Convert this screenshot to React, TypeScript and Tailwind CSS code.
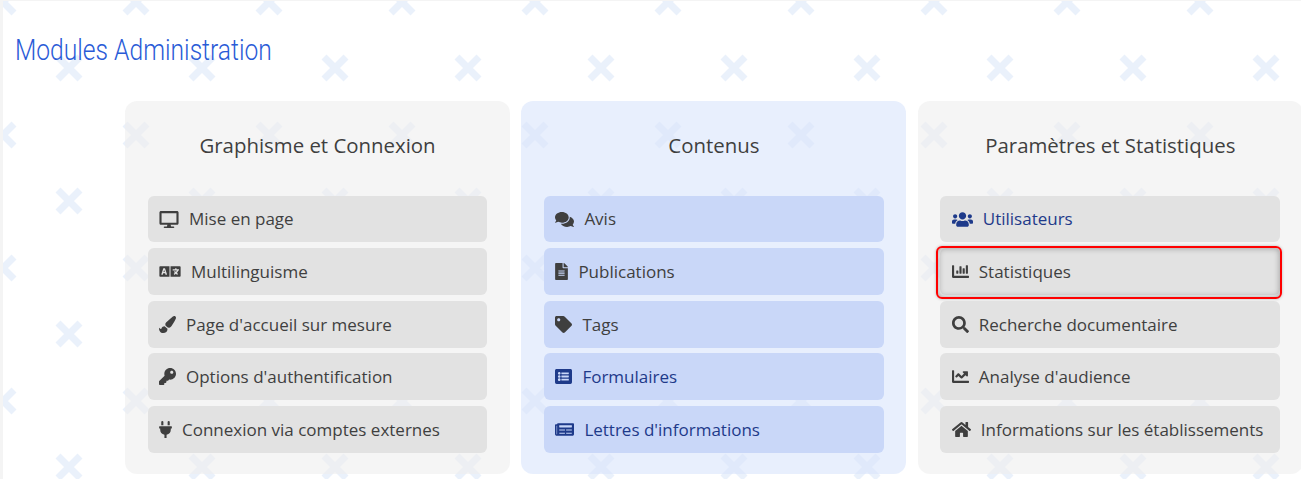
import type { IconType } from "react-icons";
import {
  FaChartBar,
  FaChartLine,
  FaComments,
  FaDesktop,
  FaFileAlt,
  FaHome,
  FaKey,
  FaLanguage,
  FaListAlt,
  FaNewspaper,
  FaPaintBrush,
  FaPlug,
  FaSearch,
  FaTag,
  FaUsers,
} from "react-icons/fa";

type Item = {
  label: string;
  icon: IconType;
  iconWidth: string;
  accent?: boolean;
  highlighted?: boolean;
};

type Panel = {
  title: string;
  blue?: boolean;
  items: Item[];
};

const panels: Panel[] = [
  {
    title: "Graphisme et Connexion",
    items: [
      { label: "Mise en page", icon: FaDesktop, iconWidth: "w-[20px]" },
      { label: "Multilinguisme", icon: FaLanguage, iconWidth: "w-[22px]" },
      { label: "Page d'accueil sur mesure", icon: FaPaintBrush, iconWidth: "w-[17px]" },
      { label: "Options d'authentification", icon: FaKey, iconWidth: "w-[17px]" },
      { label: "Connexion via comptes externes", icon: FaPlug, iconWidth: "w-[13px]" },
    ],
  },
  {
    title: "Contenus",
    blue: true,
    items: [
      { label: "Avis", icon: FaComments, iconWidth: "w-[19px]" },
      { label: "Publications", icon: FaFileAlt, iconWidth: "w-[13px]" },
      { label: "Tags", icon: FaTag, iconWidth: "w-[17px]" },
      { label: "Formulaires", icon: FaListAlt, iconWidth: "w-[17px]", accent: true },
      { label: "Lettres d'informations", icon: FaNewspaper, iconWidth: "w-[19px]", accent: true },
    ],
  },
  {
    title: "Paramètres et Statistiques",
    items: [
      { label: "Utilisateurs", icon: FaUsers, iconWidth: "w-[21px]", accent: true },
      { label: "Statistiques", icon: FaChartBar, iconWidth: "w-[17px]", highlighted: true },
      { label: "Recherche documentaire", icon: FaSearch, iconWidth: "w-[17px]" },
      { label: "Analyse d'audience", icon: FaChartLine, iconWidth: "w-[17px]" },
      { label: "Informations sur les établissements", icon: FaHome, iconWidth: "w-[19px]" },
    ],
  },
];

function ModuleButton({ item, blue }: { item: Item; blue?: boolean }) {
  const Icon = item.icon;
  return (
    <a
      className={`relative flex items-center gap-[10px] rounded-md pt-[0.4px] pl-[11.4px] text-[17px] ${
        blue ? "bg-[#c9d7f8]" : "bg-[#e2e2e2]"
      } ${item.accent ? "text-[#1e3a8a]" : "text-[#3f3f3f]"}`}
    >
      <Icon className={`h-[17px] shrink-0 ${item.iconWidth}`} />
      <span>{item.label}</span>
      {item.highlighted && (
        <span className="absolute -top-[2px] -right-[2px] -bottom-[4px] -left-[4px] rounded-[6px] border-2 border-[#f00] shadow-[inset_0_0_6px_rgba(0,0,0,0.35),0_0_3px_rgba(0,0,0,0.25)]" />
      )}
    </a>
  );
}

export default function App() {
  return (
    <div className="h-[479px] w-[1301px] overflow-hidden bg-[#f4f4f4] pt-px pl-[3px] font-['Open_Sans',sans-serif]">
      <main className="h-full bg-white bg-[url(data:image/svg+xml,%3Csvg%20xmlns=%27http://www.w3.org/2000/svg%27%20width=%27133%27%20height=%27133%27%3E%3Cpath%20d=%27M22%2022L44%2044M44%2022L22%2044M89%2089L111%20111M111%2089L89%20111%27%20stroke=%27%23eaf1fb%27%20stroke-width=%277%27/%3E%3C/svg%3E)] bg-[position:33px_34px] pt-[30px] pl-3">
        <h1 className="h-[38px] origin-left scale-x-[0.835] font-['Roboto',sans-serif] text-[29.5px] leading-[38px] font-light text-[#2a5bd7]">
          Modules Administration
        </h1>
        <div className="mt-[32px] ml-[110px] grid w-[1190px] grid-cols-[repeat(3,385px)] gap-x-[11.4px]">
          {panels.map((panel) => (
            <section
              key={panel.title}
              className={`h-[373px] rounded-xl px-[22.6px] pt-[29px] ${
                panel.blue ? "bg-[#d9e4fc]/60" : "bg-[#efefef]/60"
              }`}
            >
              <h2 className="h-[30px] text-center text-[20.4px] leading-[30px] font-normal text-[#3f3f3f]">
                {panel.title}
              </h2>
              <div className="mt-[35.6px] grid grid-rows-[repeat(5,46.8px)] gap-y-[5.8px]">
                {panel.items.map((item) => (
                  <ModuleButton key={item.label} item={item} blue={panel.blue} />
                ))}
              </div>
            </section>
          ))}
        </div>
      </main>
    </div>
  );
}
